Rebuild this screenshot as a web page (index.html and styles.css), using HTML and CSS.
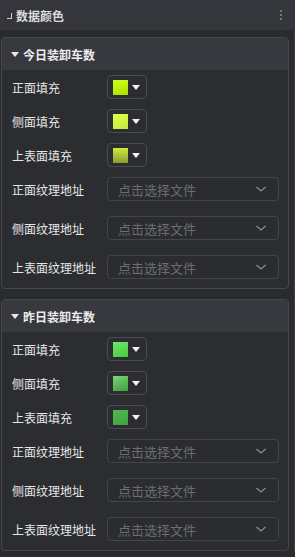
FILE: index.html
```html
<!DOCTYPE html>
<html lang="zh-CN">
<head>
    <meta charset="UTF-8">
    <meta name="viewport" content="width=device-width, initial-scale=1.0">
    <title>数据颜色</title>
    <link rel="stylesheet" href="styles.css">
</head>
<body>
    <div class="panel">
        <div class="panel-head">
            <span class="corner"></span>
            <span class="panel-title">数据颜色</span>
            <span class="more"><i></i><i></i><i></i></span>
        </div>
        <div class="panel-body">
            <div class="group">
                <div class="group-head"><span class="caret"></span>今日装卸车数</div>
                <div class="group-body">
                    <div class="row">
                        <span class="label">正面填充</span>
                        <div class="color-btn"><span class="swatch sw-a1"></span><span class="arrow"></span></div>
                    </div>
                    <div class="row">
                        <span class="label">侧面填充</span>
                        <div class="color-btn"><span class="swatch sw-a2"></span><span class="arrow"></span></div>
                    </div>
                    <div class="row">
                        <span class="label">上表面填充</span>
                        <div class="color-btn"><span class="swatch sw-a3"></span><span class="arrow"></span></div>
                    </div>
                    <div class="row">
                        <span class="label">正面纹理地址</span>
                        <div class="select">点击选择文件<svg class="chev" viewBox="0 0 12 8"><path d="M1.5 2 L6 6 L10.5 2" /></svg></div>
                    </div>
                    <div class="row tex">
                        <span class="label">侧面纹理地址</span>
                        <div class="select">点击选择文件<svg class="chev" viewBox="0 0 12 8"><path d="M1.5 2 L6 6 L10.5 2" /></svg></div>
                    </div>
                    <div class="row tex">
                        <span class="label">上表面纹理地址</span>
                        <div class="select">点击选择文件<svg class="chev" viewBox="0 0 12 8"><path d="M1.5 2 L6 6 L10.5 2" /></svg></div>
                    </div>
                </div>
            </div>

            <div class="group">
                <div class="group-head"><span class="caret"></span>昨日装卸车数</div>
                <div class="group-body">
                    <div class="row">
                        <span class="label">正面填充</span>
                        <div class="color-btn"><span class="swatch sw-b1"></span><span class="arrow"></span></div>
                    </div>
                    <div class="row">
                        <span class="label">侧面填充</span>
                        <div class="color-btn"><span class="swatch sw-b2"></span><span class="arrow"></span></div>
                    </div>
                    <div class="row">
                        <span class="label">上表面填充</span>
                        <div class="color-btn"><span class="swatch sw-b3"></span><span class="arrow"></span></div>
                    </div>
                    <div class="row">
                        <span class="label">正面纹理地址</span>
                        <div class="select">点击选择文件<svg class="chev" viewBox="0 0 12 8"><path d="M1.5 2 L6 6 L10.5 2" /></svg></div>
                    </div>
                    <div class="row tex">
                        <span class="label">侧面纹理地址</span>
                        <div class="select">点击选择文件<svg class="chev" viewBox="0 0 12 8"><path d="M1.5 2 L6 6 L10.5 2" /></svg></div>
                    </div>
                    <div class="row tex">
                        <span class="label">上表面纹理地址</span>
                        <div class="select">点击选择文件<svg class="chev" viewBox="0 0 12 8"><path d="M1.5 2 L6 6 L10.5 2" /></svg></div>
                    </div>
                </div>
            </div>
        </div>
    </div>
</body>
</html>
```

FILE: styles.css
```css
body {
    margin: 0;
    background: #2a2b2f;
    font-family: "Noto Sans CJK SC", "Noto Sans", sans-serif;
    font-size: 12px;
    color: #e4e4e4;
    width: 295px;
    height: 557px;
    overflow: hidden;
}
.panel-head {
    height: 30px;
    background: #35363b;
    display: flex;
    align-items: center;
    padding: 0 8px 0 7px;
}
.corner {
    width: 4px;
    height: 5px;
    border-right: 1px solid #d0d0d0;
    border-bottom: 1px solid #d0d0d0;
    margin: 2px 4px 0 0;
}
.panel-title {
    font-weight: 600;
    color: #dcdcdc;
    flex: 1;
}
.more {
    display: flex;
    flex-direction: column;
    gap: 2px;
    margin-right: 5px;
}
.more i {
    width: 2px;
    height: 2px;
    background: #8a8b8f;
    border-radius: 1px;
}
.panel-body {
    padding: 7px 5px 0 1px;
    border-right: 1px solid #3e3f44;
    width: 288px;
    display: flex;
    flex-direction: column;
    gap: 10px;
}
.group {
    border: 1px solid #46474c;
    border-radius: 4px;
    overflow: hidden;
    background: #2c2d31;
}
.group-head {
    height: 32px;
    background: #38393e;
    display: flex;
    align-items: center;
    padding-left: 9px;
    font-size: 12px;
    font-weight: 600;
    color: #ececec;
}
.caret {
    width: 0;
    height: 0;
    border-left: 4px solid transparent;
    border-right: 4px solid transparent;
    border-top: 5px solid #e8e8e8;
    margin-right: 4px;
}
.group-body {
    padding-bottom: 4px;
}
.row {
    height: 34px;
    display: flex;
    align-items: center;
    padding-left: 10px;
}
.row.tex {
    margin-top: 5px;
}
.label {
    width: 95px;
    color: #e6e6e6;
}
.color-btn {
    width: 37px;
    height: 22px;
    border: 1px solid #4a4b50;
    border-radius: 4px;
    display: flex;
    align-items: center;
    padding-left: 5px;
    gap: 4px;
    box-sizing: content-box;
    width: 33px;
}
.swatch {
    width: 15px;
    height: 15px;
}
.sw-a1 { background: linear-gradient(160deg, #d2ff1c, #a6e000); }
.sw-a2 { background: linear-gradient(160deg, #e2ff48, #c6e83a); }
.sw-a3 { background: linear-gradient(180deg, #d0ea40, #8b9c2c); }
.sw-b1 { background: linear-gradient(160deg, #6ee866, #46c845); }
.sw-b2 { background: linear-gradient(160deg, #7ad678, #3f9e40); }
.sw-b3 { background: linear-gradient(160deg, #52b852, #40a040); }
.arrow {
    width: 0;
    height: 0;
    border-left: 4px solid transparent;
    border-right: 4px solid transparent;
    border-top: 5px solid #f4f4f4;
    margin-top: 1px;
}
.select {
    width: 160px;
    height: 22px;
    border: 1px solid #44454a;
    border-radius: 4px;
    background: #2b2c30;
    display: flex;
    align-items: center;
    padding-left: 10px;
    font-size: 13px;
    color: #6c6d72;
    position: relative;
}
.chev {
    width: 12px;
    height: 8px;
    margin-left: auto;
    margin-right: 11px;
    fill: none;
    stroke: #8b8c90;
    stroke-width: 1.3;
}
```
